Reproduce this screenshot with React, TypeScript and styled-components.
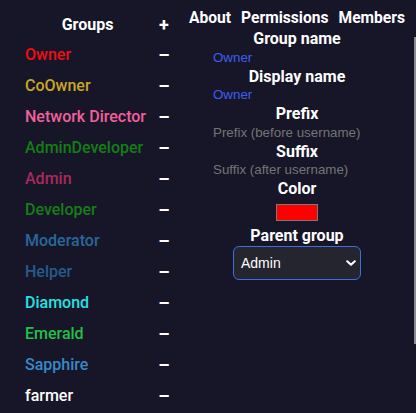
import styled, { createGlobalStyle } from 'styled-components';

const groups = [
  { name: 'Owner', color: '#f20d0d' },
  { name: 'CoOwner', color: '#c9a722' },
  { name: 'Network Director', color: '#f2609c' },
  { name: 'AdminDeveloper', color: '#127f14' },
  { name: 'Admin', color: '#a82a5c' },
  { name: 'Developer', color: '#167d17' },
  { name: 'Moderator', color: '#2a679b' },
  { name: 'Helper', color: '#265a8a' },
  { name: 'Diamond', color: '#25e2e2' },
  { name: 'Emerald', color: '#22c146' },
  { name: 'Sapphire', color: '#3889c6' },
  { name: 'farmer', color: '#ffffff' },
];

const GlobalStyle = createGlobalStyle`
  html, body {
    margin: 0;
    background: #171629;
    font-family: Roboto, 'DejaVu Sans', sans-serif;
    color: #fff;
  }
`;

export default function App() {
  return (
    <>
      <GlobalStyle />
      <Page>
        <Sidebar>
          <HeaderRow>
            <Title>Groups</Title>
            <Sign>+</Sign>
          </HeaderRow>
          {groups.map((g) => (
            <GroupRow key={g.name}>
              <GroupName color={g.color}>{g.name}</GroupName>
              <Sign>–</Sign>
            </GroupRow>
          ))}
        </Sidebar>
        <Main>
          <Tabs>
            <Tab>About</Tab>
            <Tab>Permissions</Tab>
            <Tab>Members</Tab>
          </Tabs>
          <Form>
            <Label>Group name</Label>
            <TextInput defaultValue="Owner" />
            <Label>Display name</Label>
            <TextInput defaultValue="Owner" />
            <Label>Prefix</Label>
            <TextInput placeholder="Prefix (before username)" />
            <Label>Suffix</Label>
            <TextInput placeholder="Suffix (after username)" />
            <Label>Color</Label>
            <Swatch color="#ff0000" />
            <Label>Parent group</Label>
            <SelectBox>
              <span>Admin</span>
              <svg width="10" height="6" viewBox="0 0 10 6" fill="none">
                <path d="M1.2 1.2L5 4.8 8.8 1.2" stroke="#fff" strokeWidth="2" strokeLinecap="round" strokeLinejoin="round" />
              </svg>
            </SelectBox>
          </Form>
        </Main>
        <ScrollThumb />
      </Page>
    </>
  );
}

const Page = styled.div`
  position: relative;
  display: flex;
  width: 416px;
  height: 413px;
  overflow: hidden;
`;

const Sidebar = styled.div`
  width: 178px;
  flex-shrink: 0;
  padding: 9px 0 0 25px;
  box-sizing: border-box;
`;

const HeaderRow = styled.div`
  display: grid;
  grid-template-columns: 125px 28px;
  align-items: center;
  height: 30px;
`;

const GroupRow = styled(HeaderRow)`
  height: 31px;
`;

const Title = styled.span`
  text-align: center;
  font-size: 16px;
  font-weight: 700;
`;

const GroupName = styled.span<{ color: string }>`
  color: ${(p) => p.color};
  font-size: 16px;
  font-weight: 500;
  white-space: nowrap;
`;

const Sign = styled.span`
  text-align: center;
  font-size: 18px;
  font-weight: 700;
`;

const Main = styled.div`
  width: 238px;
  display: flex;
  flex-direction: column;
  align-items: center;
`;

const Tabs = styled.div`
  display: flex;
  gap: 10px;
  padding-top: 8px;
  height: 20px;
  align-items: center;
  white-space: nowrap;
`;

const Tab = styled.span`
  font-size: 15.6px;
  font-weight: 700;
`;

const Form = styled.div`
  display: flex;
  flex-direction: column;
  align-items: center;
  padding-top: 1px;
`;

const Label = styled.div`
  font-size: 16px;
  font-weight: 700;
  line-height: 19px;
`;

const TextInput = styled.input`
  width: 168px;
  height: 18.5px;
  box-sizing: border-box;
  padding: 0;
  border: none;
  outline: none;
  background: transparent;
  font-family: 'Liberation Sans', Arial, sans-serif;
  font-size: 13.33px;
  color: #3e5ef2;
  &::placeholder {
    color: #747474;
  }
`;

const Swatch = styled.div<{ color: string }>`
  width: 42px;
  height: 17px;
  margin: 6px 0 5px;
  box-sizing: border-box;
  border: 1px solid #7a7a7a;
  background: ${(p) => p.color};
`;

const SelectBox = styled.div`
  width: 128px;
  height: 34px;
  margin-top: 1px;
  box-sizing: border-box;
  display: flex;
  align-items: center;
  justify-content: space-between;
  padding: 0 4px 0 7px;
  border: 1px solid #3d6de0;
  border-radius: 6px;
  background: #25252f;
  font-family: 'Liberation Sans', Arial, sans-serif;
  font-size: 14px;
  color: #fff;
`;

const ScrollThumb = styled.div`
  position: absolute;
  right: 0;
  top: 37px;
  width: 2px;
  height: 307px;
  background: #8a8a8f;
`;
